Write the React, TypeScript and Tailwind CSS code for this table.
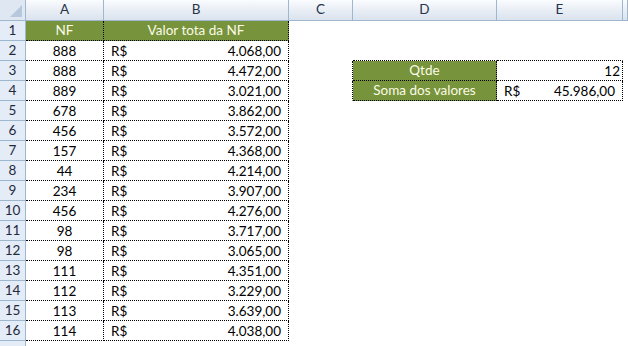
import React from "react";

const notas = [
  ["888", "4.068,00"],
  ["888", "4.472,00"],
  ["889", "3.021,00"],
  ["678", "3.862,00"],
  ["456", "3.572,00"],
  ["157", "4.368,00"],
  ["44", "4.214,00"],
  ["234", "3.907,00"],
  ["456", "4.276,00"],
  ["98", "3.717,00"],
  ["98", "3.065,00"],
  ["111", "4.351,00"],
  ["112", "3.229,00"],
  ["113", "3.639,00"],
  ["114", "4.038,00"],
];

const colHeader =
  "flex items-center justify-center border-r border-b border-[#9eb6ce] bg-gradient-to-b from-[#fafcfe] via-[#e9eef5] to-[#dbe3ee] text-[#27344a]";
const rowHeader =
  "flex items-center justify-center pt-px border-r border-b border-[#9eb6ce] bg-[#e4ecf7] text-[#1f2a3a]";
const green = "bg-[#77933c] text-[#fbfbe6]";
const dotted = "border-r border-b border-dotted border-black";
const blank = "border-r border-b border-transparent";

function Corner() {
  return (
    <div className="relative border-r border-b border-[#9eb6ce] bg-[#dfe7f2]">
      <svg className="absolute right-[3px] bottom-[3px]" width="12" height="12" viewBox="0 0 12 12">
        <polygon points="12,0 12,12 0,12" fill="#b7c8dd" />
      </svg>
    </div>
  );
}

export default function App() {
  const rows = [];

  for (let r = 1; r <= 17; r++) {
    const nota = notas[r - 2];
    rows.push(
      <React.Fragment key={r}>
        {/* row 17 is cut by the window edge, its number doesn't show */}
        <div className={rowHeader}>{r < 17 ? r : null}</div>

        {/* A */}
        {r === 1 ? (
          <div className={`${dotted} ${green} flex items-center justify-center pt-px`}>NF</div>
        ) : r <= 16 ? (
          <div className={`${dotted} flex items-center justify-center pt-[2px]`}>{nota[0]}</div>
        ) : (
          <div className={blank} />
        )}

        {/* B */}
        {r === 1 ? (
          <div className={`${dotted} ${green} flex items-center justify-center pt-px`}>
            Valor tota da NF
          </div>
        ) : r <= 16 ? (
          <div className={`${dotted} flex items-center justify-between px-[7px] pt-[2px]`}>
            <span>R$</span>
            <span>{nota[1]}</span>
          </div>
        ) : (
          <div className={blank} />
        )}

        {/* C */}
        {r === 3 || r === 4 ? (
          <div className="border-r border-b border-dotted border-r-black border-b-transparent" />
        ) : (
          <div className={blank} />
        )}

        {/* D */}
        {r === 2 ? (
          <div className="border-r border-b border-dotted border-r-transparent border-b-black" />
        ) : r === 3 ? (
          <div className={`${dotted} ${green} flex items-center justify-center pt-px`}>Qtde</div>
        ) : r === 4 ? (
          <div className={`${dotted} ${green} flex items-center justify-center pt-px`}>
            Soma dos valores
          </div>
        ) : (
          <div className={blank} />
        )}

        {/* E */}
        {r === 2 ? (
          <div className="border-r border-b border-dotted border-r-transparent border-b-black" />
        ) : r === 3 ? (
          <div className={`${dotted} flex items-center justify-end pr-[2px] pt-[2px]`}>12</div>
        ) : r === 4 ? (
          <div className={`${dotted} flex items-center justify-between pl-[7px] pr-[7px] pt-[2px]`}>
            <span>R$</span>
            <span>45.986,00</span>
          </div>
        ) : (
          <div className={blank} />
        )}

        {/* F */}
        <div className={blank} />
      </React.Fragment>
    );
  }

  return (
    <div
      className="w-[628px] h-[346px] overflow-hidden bg-white text-black text-[13.5px] leading-none"
      style={{ fontFamily: "Lato, 'Open Sans', sans-serif" }}
    >
      <div className="grid grid-cols-[26px_78px_185px_64px_144px_126px_1fr] grid-rows-[21px_repeat(17,20px)]">
        <Corner />
        <div className={colHeader}>A</div>
        <div className={colHeader}>B</div>
        <div className={colHeader}>C</div>
        <div className={colHeader}>D</div>
        <div className={colHeader}>E</div>
        <div className={colHeader} />
        {rows}
      </div>
    </div>
  );
}
